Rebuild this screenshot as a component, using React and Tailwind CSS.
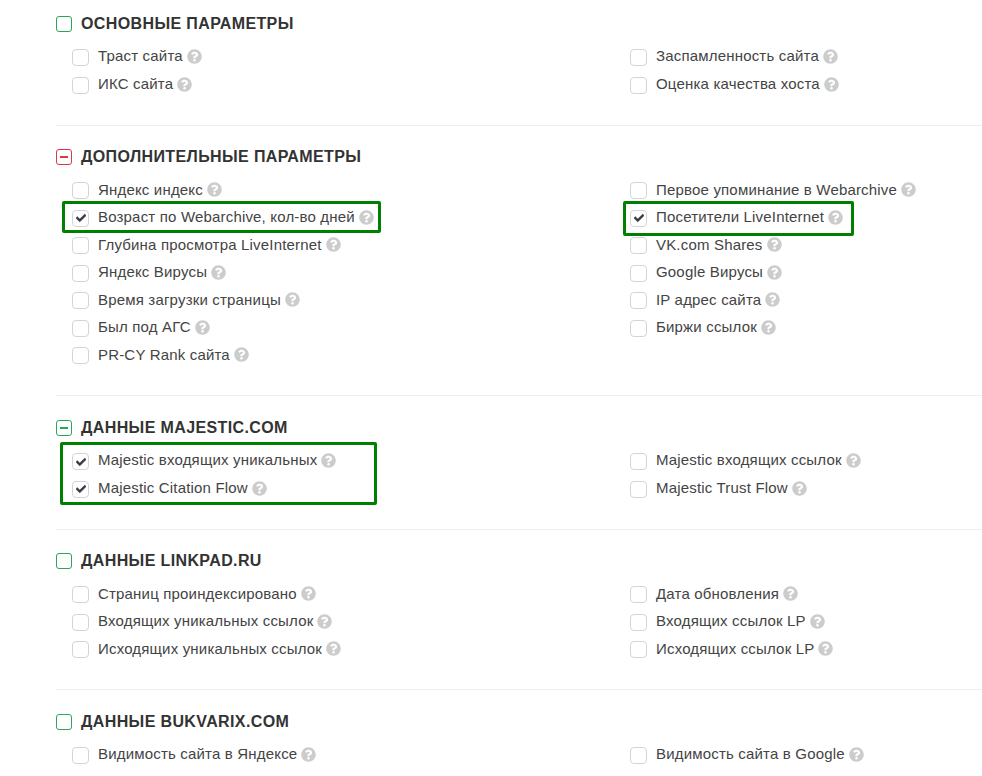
import { FaCheck, FaQuestionCircle } from 'react-icons/fa'

const sections = [
  {
    title: 'Основные параметры',
    state: 'off',
    left: [{ t: 'Траст сайта' }, { t: 'ИКС сайта' }],
    right: [{ t: 'Заспамленность сайта' }, { t: 'Оценка качества хоста' }],
  },
  {
    title: 'Дополнительные параметры',
    state: 'red',
    left: [
      { t: 'Яндекс индекс' },
      { t: 'Возраст по Webarchive, кол-во дней', on: true },
      { t: 'Глубина просмотра LiveInternet' },
      { t: 'Яндекс Вирусы' },
      { t: 'Время загрузки страницы' },
      { t: 'Был под АГС' },
      { t: 'PR-CY Rank сайта' },
    ],
    right: [
      { t: 'Первое упоминание в Webarchive' },
      { t: 'Посетители LiveInternet', on: true },
      { t: 'VK.com Shares' },
      { t: 'Google Вирусы' },
      { t: 'IP адрес сайта' },
      { t: 'Биржи ссылок' },
    ],
  },
  {
    title: 'Данные Majestic.com',
    state: 'green',
    left: [
      { t: 'Majestic входящих уникальных', on: true },
      { t: 'Majestic Citation Flow', on: true },
    ],
    right: [{ t: 'Majestic входящих ссылок' }, { t: 'Majestic Trust Flow' }],
  },
  {
    title: 'Данные Linkpad.ru',
    state: 'off',
    left: [
      { t: 'Страниц проиндексировано' },
      { t: 'Входящих уникальных ссылок' },
      { t: 'Исходящих уникальных ссылок' },
    ],
    right: [
      { t: 'Дата обновления' },
      { t: 'Входящих ссылок LP' },
      { t: 'Исходящих ссылок LP' },
    ],
  },
  {
    title: 'Данные Bukvarix.com',
    state: 'off',
    last: true,
    left: [{ t: 'Видимость сайта в Яндексе' }],
    right: [{ t: 'Видимость сайта в Google' }],
  },
]

function Option({ t, on }) {
  return (
    <div className="flex h-[27.5px] items-center">
      <span className="mt-[2px] flex h-[17px] w-[17px] shrink-0 items-center justify-center rounded-[4px] border border-[#d4d4d4] bg-white text-[#333a45]">
        {on && <FaCheck className="h-[10px] w-[10px] stroke-current stroke-[30]" />}
      </span>
      <span className="ml-[9px] text-[15px] tracking-[0.18px] text-[#444444]">{t}</span>
      <FaQuestionCircle className="ml-[4px] h-[15px] w-[15px] text-[#cccccc]" />
    </div>
  )
}

function HeadBox({ state }) {
  if (state === 'off') {
    return <span className="h-4 w-4 shrink-0 rounded-[3px] border border-[#28a65a]" />
  }
  const box = state === 'red' ? 'border-[#dc3545]' : 'border-[#28a65a]'
  const bar = state === 'red' ? 'bg-[#dc3545]' : 'bg-[#28a65a]'
  return (
    <span className={`flex h-4 w-4 shrink-0 items-center justify-center rounded-[3px] border ${box}`}>
      <span className={`h-[2px] w-2 ${bar}`} />
    </span>
  )
}

function Section({ title, state, left, right, last }) {
  return (
    <section className={last ? 'pt-[23.75px]' : 'border-b border-[#eeeeee] pt-[23.75px] pb-[26.75px]'}>
      <div className="flex h-4 items-center">
        <HeadBox state={state} />
        <h2 className="ml-[9px] text-[16px] font-bold uppercase tracking-[0.38px] text-[#333333]">{title}</h2>
      </div>
      <div className="mt-[10.75px] flex pl-4">
        <div className="w-[558px]">
          {left.map((o) => (
            <Option key={o.t} {...o} />
          ))}
        </div>
        <div>
          {right.map((o) => (
            <Option key={o.t} {...o} />
          ))}
        </div>
      </div>
    </section>
  )
}

export default function App() {
  return (
    <div className="relative h-[776px] overflow-hidden bg-white pl-14 font-['Liberation_Sans',Arial,sans-serif]">
      <div className="-mt-[7.75px]">
        {sections.map((s) => (
          <Section key={s.title} {...s} />
        ))}
      </div>
      <div className="absolute left-[62px] top-[201px] h-[32px] w-[319px] rounded-[2px] border-[3px] border-[#008000]" />
      <div className="absolute left-[623px] top-[201px] h-[35px] w-[231px] rounded-[2px] border-[3px] border-[#008000]" />
      <div className="absolute left-[60px] top-[442px] h-[63px] w-[317px] rounded-[2px] border-[3px] border-[#008000]" />
    </div>
  )
}
